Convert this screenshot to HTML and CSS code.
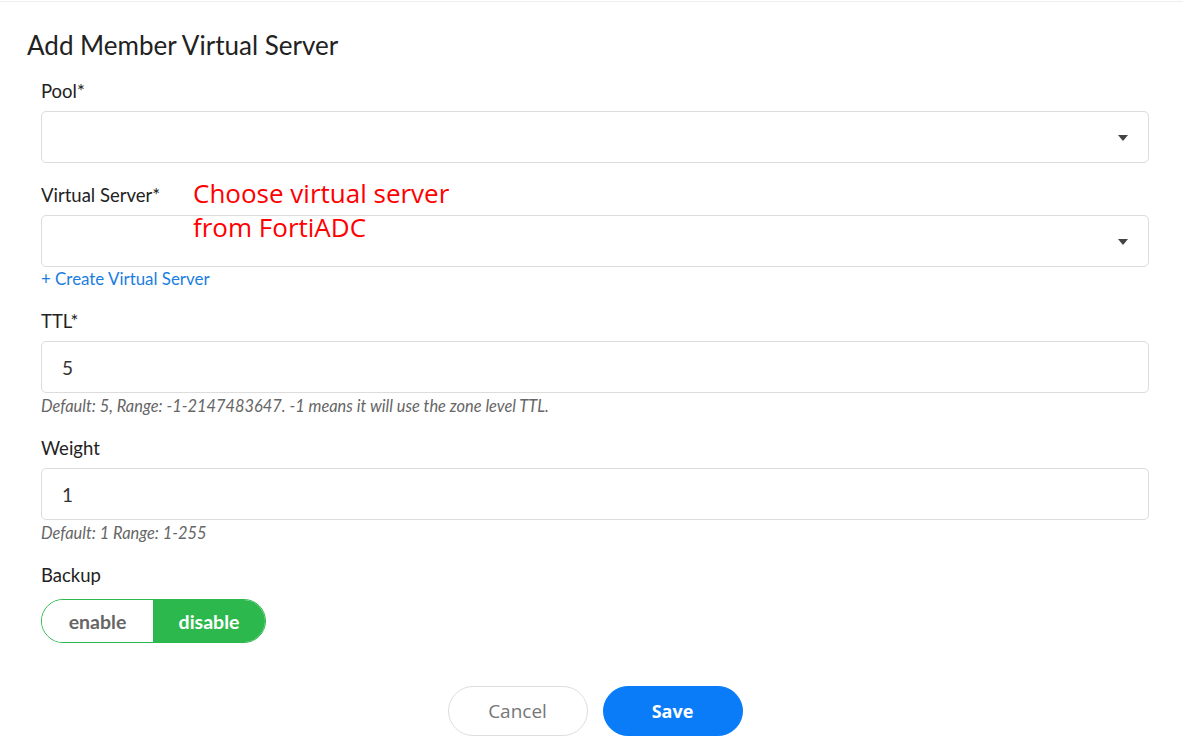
FILE: index.html
```html
<!DOCTYPE html>
<html>
<head>
  <title>Add Member Virtual Server</title>
  <link rel="stylesheet" href="styles.css">
</head>
<body>
  <div class="page">
    <h2 class="title">Add Member Virtual Server</h2>
    <form class="form">
      <div class="field">
        <label class="label">Pool*</label>
        <div class="select"><span class="caret"></span></div>
      </div>

      <div class="field">
        <div class="label-row">
          <label class="label">Virtual Server*</label>
          <div class="note">Choose virtual server<br>from FortiADC</div>
        </div>
        <div class="select"><span class="caret"></span></div>
        <a class="link" href="#">+ Create Virtual Server</a>
      </div>

      <div class="field">
        <label class="label">TTL*</label>
        <input class="input" type="text" value="5">
        <p class="help">Default: 5, Range: -1-2147483647. -1 means it will use the zone level TTL.</p>
      </div>

      <div class="field">
        <label class="label">Weight</label>
        <input class="input" type="text" value="1">
        <p class="help">Default: 1 Range: 1-255</p>
      </div>

      <div class="field">
        <label class="label">Backup</label>
        <div class="toggle">
          <button type="button" class="toggle-btn">enable</button>
          <button type="button" class="toggle-btn active">disable</button>
        </div>
      </div>

      <div class="actions">
        <button type="button" class="btn btn-cancel">Cancel</button>
        <button type="button" class="btn btn-save">Save</button>
      </div>
    </form>
  </div>
</body>
</html>
```

FILE: styles.css
```css
body {
  margin: 0;
  font-family: Lato, "Open Sans", sans-serif;
  color: #222;
  background: #fff;
}

.page {
  margin-top: 1px;
  border-top: 1px solid #eee;
  width: 1183px;
}

.title {
  margin: 0;
  padding: 28px 0 0 27px;
  font-size: 26px;
  font-weight: 400;
  line-height: 30px;
  color: #222;
}

.form {
  padding: 20px 0 0 41px;
  width: 1108px;
}

.field {
  margin-bottom: 21px;
}

.label {
  display: block;
  font-size: 18.5px;
  line-height: 22px;
  margin-bottom: 9px;
  color: #222;
}

.label-row {
  position: relative;
  z-index: 1;
}

.note {
  position: absolute;
  left: 152px;
  top: -8px;
  font-family: "Open Sans", sans-serif;
  font-size: 26px;
  line-height: 34px;
  color: #f00;
}

.select,
.input {
  box-sizing: border-box;
  display: block;
  width: 100%;
  height: 52px;
  border: 1px solid #dcdcdc;
  border-radius: 5px;
  background: #fff;
  position: relative;
}

.input {
  padding: 0 20px;
  font-family: Lato, sans-serif;
  font-size: 19px;
  color: #333;
  outline: none;
}

.caret {
  position: absolute;
  right: 20px;
  top: 23px;
  width: 0;
  height: 0;
  border-left: 5px solid transparent;
  border-right: 5px solid transparent;
  border-top: 6px solid #444;
}

.link {
  display: block;
  margin-top: 2px;
  font-size: 16.9px;
  line-height: 20px;
  color: #1a7de0;
  text-decoration: none;
}

.help {
  margin: 3px 0 0;
  font-size: 16.4px;
  font-style: italic;
  line-height: 20px;
  color: #666;
}

.toggle {
  display: flex;
  width: 225px;
  height: 44px;
  border: 1px solid #2db84d;
  border-radius: 22px;
  overflow: hidden;
  box-sizing: border-box;
  margin-top: 13px;
}

.toggle-btn {
  width: 111px;
  border: none;
  background: #fff;
  font-family: Lato, sans-serif;
  font-size: 19.5px;
  font-weight: 700;
  color: #666;
  cursor: pointer;
}

.toggle-btn.active {
  flex: 1;
  background: #2db84d;
  color: #fff;
}

.actions {
  display: flex;
  justify-content: center;
  gap: 15px;
  margin-top: 43px;
}

.btn {
  width: 140px;
  height: 50px;
  border-radius: 25px;
  font-family: "Open Sans", sans-serif;
  font-size: 19px;
  cursor: pointer;
}

.btn-cancel {
  background: #fff;
  border: 1px solid #ddd;
  color: #777;
}

.btn-save {
  background: #0a7cf8;
  border: 1px solid #0a7cf8;
  color: #fff;
  font-size: 18px;
  font-weight: 700;
}
```
